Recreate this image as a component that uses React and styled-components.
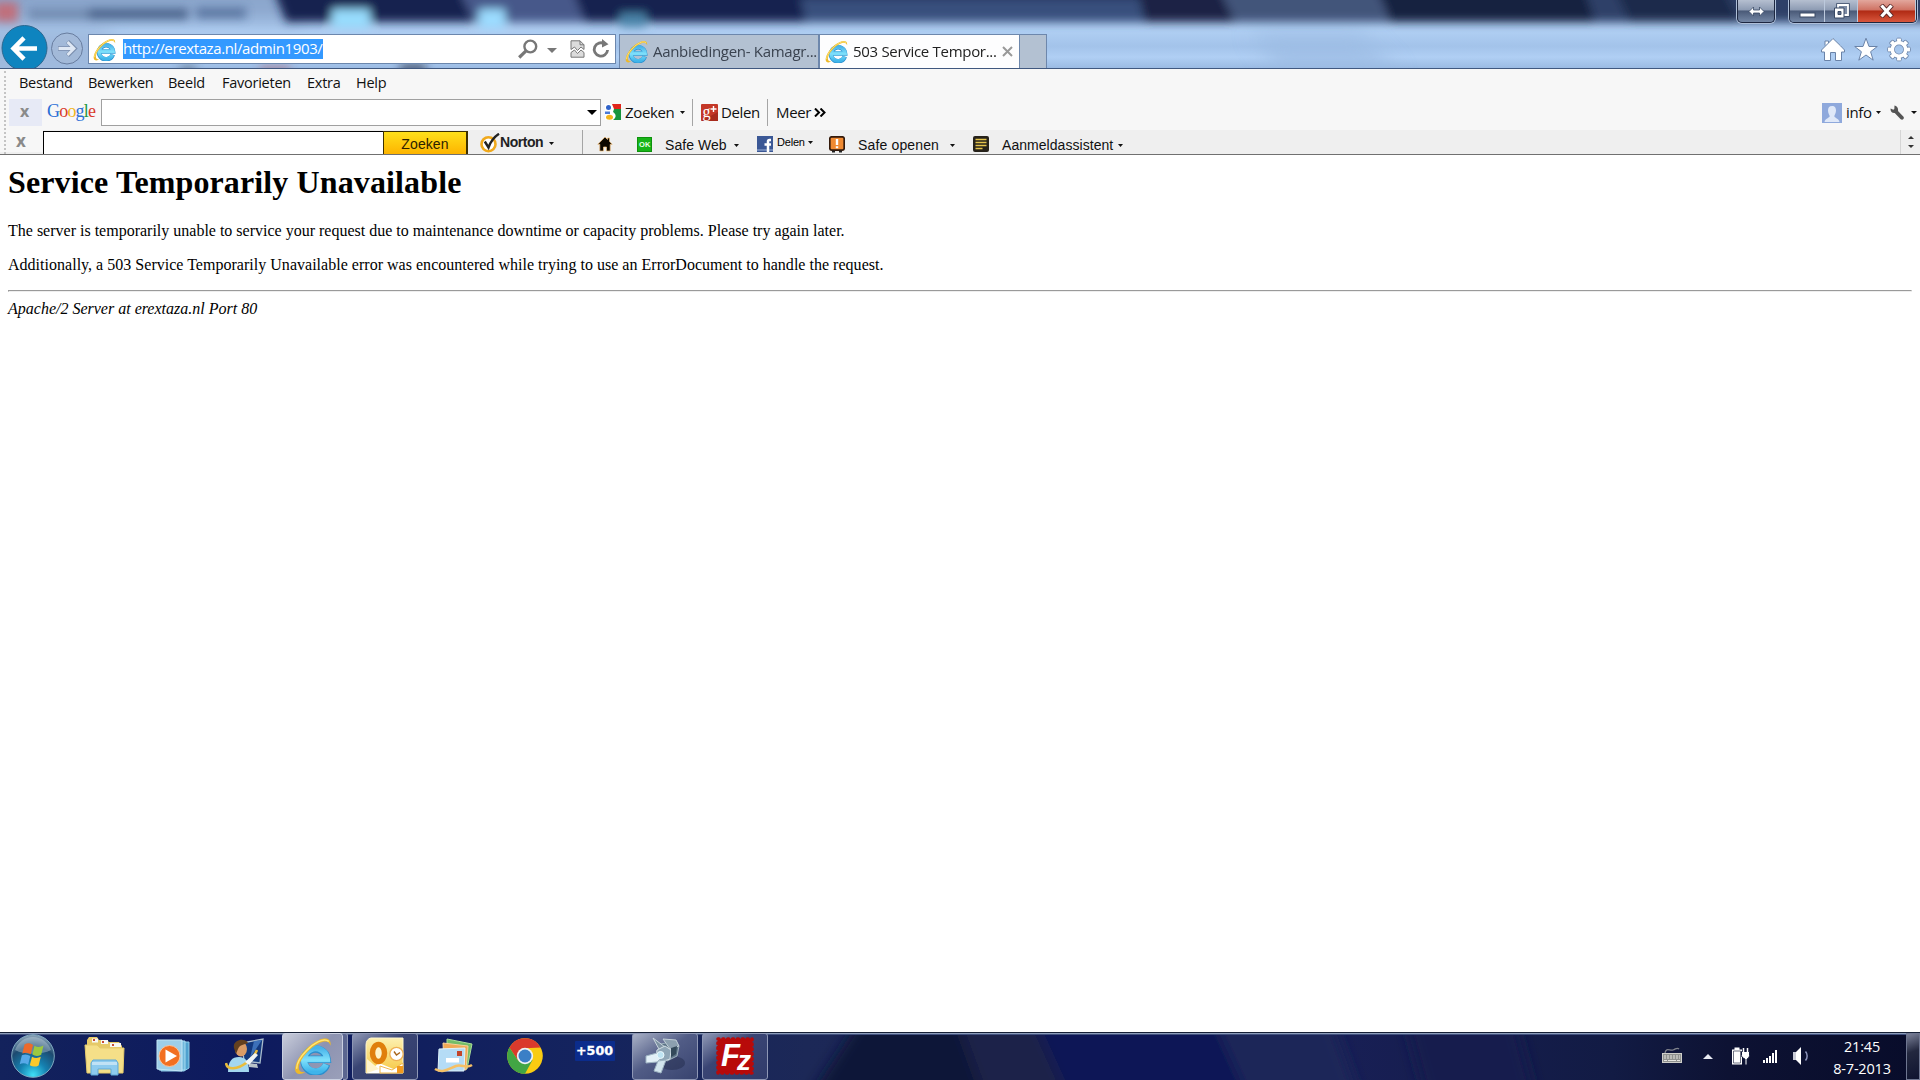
import React from "react"
import styled, { createGlobalStyle } from "styled-components"

const GlobalStyle = createGlobalStyle`
  body {
    margin: 0;
    background: white;
    overflow: hidden;
  }
`

/// icons :
function IELogo({ size = 23 }) {
  return (
    <svg width={size} height={size} viewBox="0 0 24 24">
      <defs>
        <linearGradient id="ieBlue" x1="0" y1="0" x2="0" y2="1">
          <stop offset="0" stopColor="#49b4ea" />
          <stop offset="0.5" stopColor="#7fe0fb" />
          <stop offset="1" stopColor="#3fb4ea" />
        </linearGradient>
      </defs>
      <path
        d="M20.600 17.200A7.300 7.300 0 1 1 20.900 14H8"
        fill="none"
        stroke="#2b8fce"
        strokeWidth="4.700"
      />
      <path
        d="M20.300 17.400A7.300 7.300 0 1 1 20.900 14H8"
        fill="none"
        stroke="url(#ieBlue)"
        strokeWidth="3.800"
      />
      <path
        d="M23 5.500C23.800 1.600 20.800-.3 15.500 2 8.600 5 2.300 12.400 .9 18.400-.3 23.600 3.400 24.400 7 22.300 4 22.500 2.500 21.300 3.200 18 4.400 13.200 10 6.600 15.800 3.900 20 2 22.500 2.900 23 5.500z"
        fill="#edb92a"
      />
      <path
        d="M22 2.800C18.500.2 12.500 4 8 8.500 4 12.500 1.700 17 1.700 20"
        fill="none"
        stroke="#ffe57a"
        strokeWidth=".9"
      />
    </svg>
  )
}

function Caret({ w = 6, h = 3, color = "#111", up }) {
  return (
    <svg width={w} height={h} viewBox="0 0 6 3" preserveAspectRatio="none">
      <path d={up ? "M0 3h6L3 0z" : "M0 0h6L3 3z"} fill={color} />
    </svg>
  )
}

function HouseIcon() {
  return (
    <svg width="26" height="25" viewBox="0 0 26 25">
      <path
        d="M13 1.500 1.500 13v2h3v8.500h6v-8h5v8h6V15h3v-2L20.500 8.800z M5 8.500V4h3.500v2"
        fill="#fff"
        stroke="#6a83a8"
      />
    </svg>
  )
}

function StarIcon() {
  return (
    <svg width="26" height="25" viewBox="0 0 26 25">
      <path
        d="m13 1.200 3 8.300h8.300l-6.700 5.200 2.600 8.500L13 18l-7.200 5.200 2.600-8.500L1.700 9.500H10z"
        fill="#fff"
        stroke="#6a83a8"
      />
    </svg>
  )
}

function GearIcon() {
  const teeth = [0, 45, 90, 135, 180, 225, 270, 315]
  return (
    <svg width="26" height="25" viewBox="-13 -12.500 26 25">
      {teeth.map((a) => (
        <rect
          key={a}
          x="-2.300"
          y="-11.300"
          width="4.600"
          height="5"
          rx="1"
          fill="#fff"
          stroke="#6a83a8"
          transform={`rotate(${a})`}
        />
      ))}
      <circle r="6.700" fill="none" stroke="#6a83a8" strokeWidth="5" />
      <circle r="6.700" fill="none" stroke="#fff" strokeWidth="3.600" />
      {teeth.map((a) => (
        <rect
          key={a}
          x="-1.800"
          y="-10.800"
          width="3.600"
          height="4.500"
          fill="#fff"
          transform={`rotate(${a})`}
        />
      ))}
    </svg>
  )
}

// what shines through the glass title bar
function GlassTop() {
  return (
    <Backdrop width="1920" height="68" viewBox="0 0 1920 68">
      <defs>
        <filter id="b4" filterUnits="userSpaceOnUse" x="-100" y="-60" width="2120" height="200">
          <feGaussianBlur stdDeviation="5" />
        </filter>
        <filter id="b9" filterUnits="userSpaceOnUse" x="-100" y="-60" width="2120" height="200">
          <feGaussianBlur stdDeviation="10" />
        </filter>
        <linearGradient id="skyTop" x1="0" y1="0" x2="0" y2="1">
          <stop offset="0" stopColor="#9bb9df" />
          <stop offset="0.45" stopColor="#b0cff3" />
          <stop offset="0.68" stopColor="#a3c3ea" />
          <stop offset="0.84" stopColor="#b0cff4" />
          <stop offset="1" stopColor="#9bbbe3" />
        </linearGradient>
      </defs>
      <rect width="1920" height="68" fill="url(#skyTop)" />
      <g filter="url(#b9)">
        <path d="M-60-40H300V20H-60z" fill="#8ba6cc" />
        <path d="M-40 30H110V80H-40z" fill="#9fb9dd" />
        <path d="M1250 32h110l40 42h-120z" fill="#9bbae2" opacity=".7" />
      </g>
      <g filter="url(#b4)">
        <path d="M262-40H1980V22H286z" fill="#17224f" />
        <path d="M445-40h115l25 62H474z" fill="#46588a" />
        <path d="M572-40h240v62H592z" fill="#18224f" />
        <path d="M800-2h340l12 24H806z" fill="#38507d" />
        <path d="M1130-40h80l25 62h-90z" fill="#1a2445" />
        <path d="M1205-40h157l30 62h-157z" fill="#42547a" />
        <path d="M1370-40h220l20 62h-220z" fill="#15203f" />
        <path d="M1575-40h400v62h-380z" fill="#2d3f68" />
        <path d="M1600-40h110l30 62h-110z" fill="#1e2b4c" />
        <rect x="332" y="9" width="38" height="19" fill="#97dcfd" />
        <rect x="479" y="9" width="26" height="19" fill="#9bdcff" />
        <rect x="620" y="13" width="26" height="14" fill="#4983a8" />
        <rect x="-6" y="2" width="24" height="20" fill="#c0707c" />
      </g>
      <g filter="url(#b4)" opacity=".85">
        <rect x="28" y="9" width="60" height="10" fill="#6a83a8" />
        <rect x="88" y="9" width="100" height="10" fill="#3a527a" />
        <rect x="196" y="8" width="50" height="10" fill="#4f6b96" />
      </g>
      <g filter="url(#b4)" opacity=".6">
        <rect x="180" y="66" width="16" height="8" fill="#456" />
        <rect x="260" y="66" width="30" height="8" fill="#b0606a" />
        <rect x="400" y="64" width="26" height="9" fill="#112" />
      </g>
    </Backdrop>
  )
}

function TaskbarGlass() {
  return (
    <Backdrop width="1920" height="48" viewBox="0 0 1920 48">
      <defs>
        <filter id="tb" filterUnits="userSpaceOnUse" x="-100" y="-60" width="2120" height="200">
          <feGaussianBlur stdDeviation="7" />
        </filter>
        <linearGradient id="tbBase">
          <stop offset="0" stopColor="#13225c" />
          <stop offset="0.12" stopColor="#0d1a5e" />
          <stop offset="0.3" stopColor="#14235e" />
          <stop offset="0.42" stopColor="#1c2857" />
          <stop offset="0.7" stopColor="#181f55" />
          <stop offset="0.84" stopColor="#121b44" />
          <stop offset="0.9" stopColor="#0d1233" />
          <stop offset="1" stopColor="#080c2a" />
        </linearGradient>
      </defs>
      <rect width="1920" height="48" fill="url(#tbBase)" />
      <g filter="url(#tb)">
        <path d="M872-30h90l25 110H800z" fill="#0e1638" />
        <path d="M950-30h80l50 110h-90z" fill="#1c2448" />
        <path d="M1025-30h185l50 110h-185z" fill="#0d1757" />
        <path d="M1205-30h120l40 110h-110z" fill="#1c2559" />
        <path d="M1400-30h110l30 110h-110z" fill="#131a4e" />
      </g>
      <path d="M0 .5h1920" stroke="#162036" />
      <path d="M0 1.500h1920" stroke="#8c9cba" />
      <path d="M0 2.500h1920" stroke="#42527f" />
    </Backdrop>
  )
}

function BackButton() {
  return (
    <svg width="86" height="43" viewBox="0 0 86 43">
      <circle cx="24.500" cy="23" r="22.500" fill="#0e84bf" stroke="#2a678f" />
      <path
        d="M37 23.500H14M24 12.800 13.500 23.500 24 34.200"
        fill="none"
        stroke="#fff"
        strokeWidth="4.500"
      />
      <circle cx="67" cy="23.500" r="15.500" fill="#a5b9d6" fillOpacity=".6" stroke="#677c9e" />
      <path
        d="M58 23.500h15M67.500 16.500l7 7-7 7"
        fill="none"
        stroke="#7b8fae"
        strokeWidth="4.500"
      />
      <path
        d="M58.500 23.500H73M67.500 17l6.500 6.500-6.500 6.500"
        fill="none"
        stroke="#dfe8f4"
        strokeWidth="2.800"
      />
    </svg>
  )
}

function SearchIcon() {
  return (
    <svg width="20" height="20" viewBox="0 0 20 20">
      <circle cx="12.300" cy="7.500" r="5.900" fill="none" stroke="#777" strokeWidth="2.400" />
      <path d="m8 11.800-6.800 6.700" stroke="#777" strokeWidth="3.200" />
    </svg>
  )
}

function CompatIcon() {
  return (
    <svg width="15" height="18" viewBox="0 0 15 18">
      <path d="M1 .8h9l4 4v4.700l-3-2.500-3.500 3.500L4.500 7 1 9.500z" fill="#dcdcdc" stroke="#777" />
      <path d="M1 17.200V12.500l3.500-2.500 3 3.500L11 10l3 2.500v4.700z" fill="#dcdcdc" stroke="#777" />
      <path d="M10 .8v4h4" fill="none" stroke="#777" />
    </svg>
  )
}

function RefreshIcon() {
  return (
    <svg width="18" height="20" viewBox="0 0 18 20">
      <path d="M12.500 4.800A6.700 6.700 0 1 0 15.600 11" fill="none" stroke="#777" strokeWidth="2.800" />
      <path d="M10 0v8.500l6.500-3.200z" fill="#777" />
    </svg>
  )
}

function GoogleSearchIcon() {
  return (
    <svg width="16" height="16" viewBox="0 0 16 16">
      <rect width="16" height="16" fill="#fff" />
      <path d="M7 0h9v5H9z" fill="#e0251b" />
      <path d="M9 5h7v11H8c4-3 3-6 0-8z" fill="#17953c" />
      <circle cx="3.500" cy="3.500" r="2.500" fill="#2f62c9" />
      <path d="M0 7.500h5v2.500H0z" fill="#4b7bd6" />
      <ellipse cx="4.500" cy="13.200" rx="3.500" ry="2.500" fill="#f4b51a" />
    </svg>
  )
}

function PlusIcon() {
  return (
    <svg width="17" height="17" viewBox="0 0 17 17">
      <rect width="17" height="17" rx="1" fill="#c43727" />
      <path d="M0 17 17 8v9z" fill="#a82b1d" />
      <text x="1.500" y="12.500" fontFamily="Liberation Serif, serif" fontSize="16" fill="#fff">
        g
      </text>
      <path d="M9.500 5h6M12.500 2v6" stroke="#fff" strokeWidth="1.400" />
    </svg>
  )
}

function AvatarIcon() {
  return (
    <svg width="20" height="20" viewBox="0 0 20 20">
      <rect width="20" height="20" fill="#8fa9dc" />
      <path
        d="M10 3c3 0 4 2 4 4.500S12.700 12 12.300 13c0 2 4.700 2.500 5.200 6h-15c.5-3.500 5.200-4 5.200-6C7.300 12 6 10 6 7.500S7 3 10 3z"
        fill="#dfe8f8"
      />
    </svg>
  )
}

function WrenchIcon() {
  return (
    <svg width="15" height="15" viewBox="0 0 15 15">
      <path
        d="M4.500.5 4.300 4l-1 .8L.7 3.500C0 6 1.700 8.300 4.700 8l6 6.200c2 1.300 4-.6 2.800-2.500L8 6C8.500 3 7 .8 4.500.5z"
        fill="#555"
      />
    </svg>
  )
}

function NortonIcon() {
  return (
    <svg width="20" height="20" viewBox="0 0 20 20">
      <circle cx="8.500" cy="11.200" r="7" fill="#fff" stroke="#f0a91c" strokeWidth="2.600" />
      <path d="M4.800 8.500 8.500 14.500C10.500 9 14 4 19 .8" fill="none" stroke="#222" strokeWidth="2.400" />
    </svg>
  )
}

function SmallHome() {
  return (
    <svg width="16" height="16" viewBox="0 0 16 16">
      <path
        d="M8 1 .8 8.300h2V15h3.700v-4h3v4h3.700V8.300h2L12.500 5.500V2h-2v1.500z"
        fill="#0b0700"
        stroke="#f3c27c"
        strokeWidth=".7"
      />
    </svg>
  )
}

function OkIcon() {
  return (
    <svg width="15" height="15" viewBox="0 0 15 15">
      <rect x=".5" y=".5" width="14" height="14" fill="#18b418" stroke="#0d920d" />
      <text x="2" y="9.500" fontFamily="Liberation Sans, sans-serif" fontWeight="700" fontSize="7.500" fill="#e9ffe9">
        OK
      </text>
    </svg>
  )
}

function FacebookIcon() {
  return (
    <svg width="16" height="16" viewBox="0 0 16 16">
      <rect width="16" height="16" fill="#3a5795" />
      <rect y="13" width="16" height="2" fill="#6d86b8" />
      <path d="M14 4h-1.500c-1 0-1.500.5-1.500 1.500V16M7.500 8.500H14" fill="none" stroke="#fff" strokeWidth="2.500" />
    </svg>
  )
}

function SafeIcon() {
  return (
    <svg width="16" height="17" viewBox="0 0 16 17">
      <rect x=".8" y=".8" width="14.400" height="13.400" rx="2" fill="#f08a32" stroke="#33190a" strokeWidth="1.700" />
      <path d="M8 3v6M8 10.300v2" stroke="#fff" strokeWidth="2.400" />
      <path d="M3 15.500h3M10 15.500h3" stroke="#222" strokeWidth="2" />
    </svg>
  )
}

function NotesIcon() {
  return (
    <svg width="16" height="16" viewBox="0 0 16 16">
      <rect width="16" height="16" rx="2" fill="#26221a" />
      <path d="M2.500 3.500h11M2.500 6.500h11M2.500 9.500h11M2.500 12.500h7" stroke="#e3c34c" strokeWidth="1.300" />
    </svg>
  )
}

/// taskbar icons :
function StartOrb() {
  return (
    <svg width="46" height="46" viewBox="0 0 46 46">
      <defs>
        <radialGradient id="orb" cx=".5" cy=".95" r=".95">
          <stop offset="0" stopColor="#3fe0f8" />
          <stop offset="0.35" stopColor="#1580b0" />
          <stop offset="0.7" stopColor="#1d4a70" />
          <stop offset="1" stopColor="#90a8bb" />
        </radialGradient>
      </defs>
      <circle cx="23" cy="23" r="21.300" fill="url(#orb)" stroke="#7fa9c0" />
      <path d="M5 17A19 19 0 0 1 41 17C32 22 14 22 5 17z" fill="#dce8ee" opacity=".35" />
      <path d="M14.500 11.500c3-1.800 6-1.300 8.500.5l-2.200 9.200c-2.800-1.800-5.500-2-8.500-.6z" fill="#ee6a2b" />
      <path d="M24.500 12.800c3 1.700 6 1.500 9-.2l-2.300 9.100c-3 1.600-6 1.700-8.800-.1z" fill="#9cc840" />
      <path d="M11.900 22.300c3-1.300 5.700-1 8.400.7l-2.200 8.800c-2.900-1.700-5.600-1.900-8.400-.6z" fill="#57a9e8" />
      <path d="M22 23.700c2.900 1.700 5.900 1.500 8.800.1l-2.200 8.600c-3 1.700-6 1.500-8.800-.2z" fill="#fcc92c" />
    </svg>
  )
}

function ExplorerIcon() {
  return (
    <svg width="42" height="40" viewBox="0 0 42 40">
      <path d="M3 4 5 1h8l2 3h8l2 2h10l3 4v26H3z" fill="#e6ca68" />
      <path d="M8 2.500h6v4H8zM17 4h7v4h-7zM26 7h11v4H26z" fill="#f7f8f4" />
      <path d="M9 3h2v2H9zM18 5h2v2h-2zM28 8h2v2h-2z" fill="#ca4a33" />
      <path d="M1 9h12l3 3h24l-1 25H3z" fill="#f5df88" stroke="#e6cb6c" />
      <path d="M7 39V27l2-3h23l2 3v12h-7v-6H14v6z" fill="#8dcbee" stroke="#5fa9d6" />
      <path d="M8 26h25v3H8z" fill="#c0e2f5" />
    </svg>
  )
}

function MediaIcon() {
  return (
    <svg width="34" height="34" viewBox="0 0 34 34">
      <path d="M5 3h28v26l-5 3H5z" fill="#4fa1cf" stroke="#91cee9" />
      <path d="M3 2h26v29H3z" fill="#70b8dc" stroke="#a7dcf2" />
      <path d="M1 1h25v31L1 30z" fill="#9dcfe9" stroke="#c2e6f6" />
      <circle cx="13.500" cy="17" r="10.500" fill="#f26f21" stroke="#f8c5a0" />
      <path d="m9.500 10.500 11.500 6.500-11.500 6.500z" fill="#fff" />
    </svg>
  )
}

function SupportIcon() {
  return (
    <svg width="40" height="36" viewBox="0 0 40 36">
      <path d="m17 5 21-4-3 24-16-2z" fill="#12387d" stroke="#a9bccc" strokeWidth="1.300" />
      <path d="m29 3 8-1-12 18z" fill="#3c70b8" />
      <path d="m24 25 8 1 1 4-9-1z" fill="#b9c3c9" />
      <path d="M3 34c0-11 4-15 11-15s10 5 10 15z" fill="#a3d7ef" />
      <ellipse cx="16" cy="11" rx="6" ry="7.500" fill="#d99b66" />
      <path d="M9 10C7 2 20-1 23 5c-4 2-8 1-10 6l-2 5z" fill="#63401f" />
      <path d="M1 25c1 8 12 6 20 0 6-4 9-8 11-13" fill="none" stroke="#e9bd3c" strokeWidth="2.500" />
      <path d="m20 24 10-9 3 2-9 10z" fill="#eef4f6" />
    </svg>
  )
}

function OutlookIcon() {
  return (
    <svg width="40" height="38" viewBox="0 0 40 38">
      <defs>
        <linearGradient id="olGold" x1="0" y1="0" x2="0" y2="1">
          <stop offset="0" stopColor="#fdf0b0" />
          <stop offset="1" stopColor="#f6c844" />
        </linearGradient>
      </defs>
      <path d="M6 1h32v35H1V8C1 4 3 1.500 6 1z" fill="url(#olGold)" stroke="#fff6cf" />
      <path d="M2 36 14 26l24 10z" fill="#fff" />
      <path d="m2 22 12 10L2 36z" fill="#fff3cc" />
      <path d="m15 29 12 4 11-7v10H15z" fill="#fff" stroke="#f0b74a" />
      <path d="M32 29h6v7h-6z" fill="#f39a1d" />
      <ellipse cx="13.500" cy="16" rx="6" ry="8.500" fill="#fff3c8" stroke="#e07f0c" strokeWidth="5.500" />
      <circle cx="31.500" cy="17" r="6.700" fill="#fff" stroke="#eeb053" strokeWidth="1.300" />
      <path d="m29 14.500 2.500 3.500 3.500-2.500" fill="none" stroke="#a8641a" strokeWidth="1.400" />
    </svg>
  )
}

function MailIcon() {
  return (
    <svg width="40" height="36" viewBox="0 0 40 36">
      <path d="m13 1 25 5-5 25-20-6z" fill="#74bd68" stroke="#a9dc98" />
      <path d="m9 5 25 3-2 24-22-5z" fill="#f0a956" stroke="#f9d09a" />
      <path d="m5 11 26-1-1 23H4z" fill="#b5dcf6" stroke="#e1f3fc" />
      <path d="M23 13h5v5h-5z" fill="#c2452c" />
      <path d="M12 20h13v4.500H12z" fill="#fff" />
      <path d="M1 31c8 5 15-1 21-3 6-2 10 3 16-1" fill="none" stroke="#f6c065" strokeWidth="2.600" />
    </svg>
  )
}

function ChromeLogo() {
  return (
    <svg width="38" height="38" viewBox="-19 -19 38 38">
      <circle r="17.800" fill="#f9cc12" />
      <path d="M-15.600-8.600A17.800 17.800 0 0 1 15.600-8.600L0-7.800-7 4.500z" fill="#da3a2c" />
      <path d="M-15.600-8.600A17.800 17.800 0 0 0 0 17.800L7.500 4-7 4.500z" fill="#42a644" />
      <circle r="8.200" fill="#eef3f5" />
      <circle r="6.500" fill="#3b7fc6" />
    </svg>
  )
}

function Plus500() {
  return (
    <svg width="40" height="20" viewBox="0 0 40 20">
      <rect width="40" height="20" rx="1" fill="#0b2c8c" />
      <text
        x="1"
        y="13.500"
        fontFamily="DejaVu Sans, sans-serif"
        fontWeight="700"
        fontSize="11.500"
        textLength="37"
        lengthAdjust="spacingAndGlyphs"
        fill="#fff"
        stroke="#fff"
        strokeWidth=".3"
      >
        +500
      </text>
    </svg>
  )
}

function SpotlightIcon() {
  return (
    <svg width="44" height="40" viewBox="0 0 44 40">
      <ellipse cx="29" cy="27" rx="13" ry="7" fill="#141c38" opacity=".35" />
      <path d="m18 8 13-3 5 5-2 10-10 5-9-6z" fill="#5c7486" stroke="#9fb2bf" />
      <path d="m10 2 12 9-5 4z" fill="#7e93a3" stroke="#c9d5dc" />
      <path d="m20 3 13 1 3 6-9 3z" fill="#8ca0af" stroke="#c3d0d8" />
      <path d="m14 14 8-4 6 4-1 9-9 3-5-5z" fill="#8fa6b6" stroke="#d3dfe5" />
      <path d="m3 20 11-3 4 5-4 4-11 1z" fill="#e2f0f7" stroke="#9fb5c3" />
      <path d="m15 25 8-1-5 13-7-2z" fill="#d2e5ee" stroke="#9fb5c3" />
      <circle cx="17.500" cy="19" r="3.500" fill="#bfe4f2" stroke="#eaf8fc" />
      <path d="m28 12 6-2-1 8-5 3z" fill="#33495a" />
    </svg>
  )
}

function FileZillaIcon() {
  return (
    <svg width="40" height="40" viewBox="0 0 40 40">
      <rect x="3" y="3" width="34" height="34" fill="#b80a0a" />
      <rect
        x="3"
        y="3"
        width="34"
        height="34"
        fill="none"
        stroke="#b80a0a"
        strokeWidth="3.600"
        strokeLinecap="round"
        strokeDasharray="1 3.860"
      />
      <text
        x="6"
        y="30"
        fill="#fff"
        fontFamily="Liberation Sans, sans-serif"
        fontStyle="italic"
        fontWeight="700"
        fontSize="31"
      >
        F
        <tspan dx="-3" dy="4" fontSize="28">
          z
        </tspan>
      </text>
    </svg>
  )
}

function KeyboardIcon() {
  return (
    <svg width="22" height="18" viewBox="0 0 22 18">
      <path d="M4 6c1-6 5-2 8-3s4-3 6-1" fill="none" stroke="#7f828b" strokeWidth="1.300" />
      <rect x="1.500" y="6.500" width="19" height="9" fill="#8f918f" stroke="#cfcfcb" />
      <path d="M3 9h16M3 11h16" stroke="#e5e5e0" strokeDasharray="2 1" />
      <path d="M3 13.500h16" stroke="#e5e5e0" strokeDasharray="3 1 8 1" />
    </svg>
  )
}

function BatteryIcon() {
  return (
    <svg width="19" height="20" viewBox="0 0 19 20">
      <path d="M1 3.500h2.500V1.500h5v2H11v15H1z" fill="#fff" />
      <path d="M2.500 5h7v12h-7z" fill="#fff" stroke="#4c5064" strokeWidth=".8" />
      <path d="M10.500 5.500h8v4c0 2.500-2 3-2.500 3.500V19h-2v-6c-.5-.5-3.500-1-3.500-3.500z" fill="#fff" stroke="#111738" />
      <path d="M12.500 2v4M16.500 2v4" stroke="#fff" strokeWidth="1.500" />
    </svg>
  )
}

function SignalIcon() {
  return (
    <svg width="15" height="13" viewBox="0 0 15 13">
      {[3, 5, 7, 10, 13].map((h, i) => (
        <rect key={h} x={i * 3} y={13 - h} width="2" height={h} fill="#fff" />
      ))}
    </svg>
  )
}

function SpeakerIcon() {
  return (
    <svg width="18" height="18" viewBox="0 0 18 18">
      <path d="M1 5h3v8H1z" fill="#c9cbd6" />
      <path d="m4 5 5-5v18l-5-5z" fill="#fff" />
      <path d="M13.500 4.500c2.200 2.500 2.200 6.500 0 9" fill="none" stroke="#8f96bd" strokeWidth="1.500" />
    </svg>
  )
}

const MENU = [
  ["Bestand", 69],
  ["Bewerken", 80],
  ["Beeld", 54],
  ["Favorieten", 85],
  ["Extra", 49],
  ["Help", 40],
]

const GOOGLE = [
  ["G", "#2a6fd6"],
  ["o", "#d93a2b"],
  ["o", "#efb51c"],
  ["g", "#2a6fd6"],
  ["l", "#1f9a45"],
  ["e", "#d93a2b"],
]

export default function App() {
  return (
    <Screen>
      <GlobalStyle />
      <TitleFrame>
        <GlassTop />
        <NavRow>
          <NavButtons>
            <BackButton />
          </NavButtons>
          <AddressBar>
            <IELogo />
            <Url>http://erextaza.nl/admin1903/</Url>
            <AddressTools>
              <SearchIcon />
              <Caret w={10} h={5} color="#777" />
              <CompatIcon />
              <RefreshIcon />
            </AddressTools>
          </AddressBar>
          <Tab $w={200}>
            <IELogo />
            <TabTitle>Aanbiedingen- Kamagr...</TabTitle>
          </Tab>
          <Tab $w={201} $active>
            <IELogo />
            <TabTitle>503 Service Tempor...</TabTitle>
            <TabClose width="11" height="11" viewBox="0 0 11 11">
              <path d="m1 1 9 9M10 1l-9 9" stroke="#999" strokeWidth="2" />
            </TabClose>
          </Tab>
          <Tab $w={27} />
        </NavRow>
        <FrameRight>
          <WindowButtons>
            <WinButton $w={38} $single>
              <svg width="17" height="11" viewBox="0 0 17 11">
                <path d="M1 5.500 5.500 1v3h6V1L16 5.500 11.500 10V7h-6v3z" fill="#fff" stroke="#3a4a66" strokeWidth=".8" />
              </svg>
            </WinButton>
            <WinGroup>
              <WinButton $w={35} $low>
                <svg width="17" height="6" viewBox="0 0 17 6">
                  <rect x="1" y="1" width="15" height="4" fill="#fff" stroke="#3a4a66" />
                </svg>
              </WinButton>
              <WinButton $w={33}>
                <svg width="18" height="17" viewBox="0 0 18 17">
                  <path d="M6 2h10v10H6z" fill="none" stroke="#3a4a66" strokeWidth="3.500" />
                  <path d="M6 2h10v10H6z" fill="#7d8ba5" stroke="#fff" strokeWidth="1.800" />
                  <path d="M2.500 5h9.500v10H2.500z" fill="#fff" stroke="#3a4a66" />
                  <path d="M6 8.500h3v3H6z" fill="#5f6d89" stroke="#3a4a66" />
                </svg>
              </WinButton>
              <WinButton $w={58} $close>
                <svg width="17" height="14" viewBox="0 0 17 14">
                  <path d="m3 1 11 12M14 1 3 13" stroke="#5a2a2a" strokeWidth="5" />
                  <path d="m3.500 1.500 10 11M13.500 1.500l-10 11" stroke="#fff" strokeWidth="3.300" />
                </svg>
              </WinButton>
            </WinGroup>
          </WindowButtons>
          <CommandIcons>
            <HouseIcon />
            <StarIcon />
            <GearIcon />
          </CommandIcons>
        </FrameRight>
      </TitleFrame>

      <Bars>
        <MenuBar>
          {MENU.map(([name, w]) => (
            <MenuItem key={name} $w={w}>
              {name}
            </MenuItem>
          ))}
        </MenuBar>
        <GoogleBar>
          <CloseCell>x</CloseCell>
          <GoogleWord>
            {GOOGLE.map(([c, color], i) => (
              <Letter key={i} $color={color}>
                {c}
              </Letter>
            ))}
          </GoogleWord>
          <GoogleInput>
            <Caret w={10} h={5} color="#000" />
          </GoogleInput>
          <Part $ml={4} $w={20}>
            <GoogleSearchIcon />
          </Part>
          <Part $w={55}>Zoeken</Part>
          <Part $w={12}>
            <Caret w={5} />
          </Part>
          <Divider />
          <Part $ml={8} $w={20}>
            <PlusIcon />
          </Part>
          <Part $w={46}>Delen</Part>
          <Divider />
          <Part $ml={8} $w={38}>
            Meer
          </Part>
          <Part>
            <svg width="12" height="9" viewBox="0 0 12 9">
              <path d="m1 .5 4 4-4 4M6.500.5l4 4-4 4" fill="none" stroke="#000" strokeWidth="2" />
            </svg>
          </Part>
          <Account>
            <AvatarIcon />
            <Part $ml={4} $w={30}>
              info
            </Part>
            <Part $w={14}>
              <Caret w={5} />
            </Part>
            <WrenchIcon />
            <Part $ml={6}>
              <Caret w={6} />
            </Part>
          </Account>
        </GoogleBar>
        <NortonBar>
          <NortonClose>x</NortonClose>
          <NortonInput />
          <NortonSearch>Zoeken</NortonSearch>
          <Part $ml={12} $w={20}>
            <NortonIcon />
          </Part>
          <NortonName>Norton</NortonName>
          <Part $w={33}>
            <Caret w={5} />
          </Part>
          <Divider />
          <NortonItem $ml={14} $w={40}>
            <SmallHome />
          </NortonItem>
          <NortonItem $w={28}>
            <OkIcon />
          </NortonItem>
          <NortonItem $w={69} $text>
            Safe Web
          </NortonItem>
          <NortonItem $w={23} $text>
            <Caret w={5} />
          </NortonItem>
          <NortonItem $w={20}>
            <FacebookIcon />
          </NortonItem>
          <SmallItem>Delen</SmallItem>
          <SmallCaret>
            <Caret w={5} />
          </SmallCaret>
          <NortonItem $w={29}>
            <SafeIcon />
          </NortonItem>
          <NortonItem $w={92} $text $ls={0.15}>
            Safe openen
          </NortonItem>
          <NortonItem $w={23} $text>
            <Caret w={5} />
          </NortonItem>
          <NortonItem $w={29}>
            <NotesIcon />
          </NortonItem>
          <NortonItem $w={116} $text>
            Aanmeldassistent
          </NortonItem>
          <NortonItem $text>
            <Caret w={5} />
          </NortonItem>
          <Stepper>
            <Caret up w={6} h={3} color="#333" />
            <Caret w={6} h={3} color="#333" />
          </Stepper>
        </NortonBar>
        <Grip />
      </Bars>

      <Page>
        <Heading>Service Temporarily Unavailable</Heading>
        <Text>
          The server is temporarily unable to service your request due to
          maintenance downtime or capacity problems. Please try again later.
        </Text>
        <Text $ls={0.02}>
          Additionally, a 503 Service Temporarily Unavailable error was
          encountered while trying to use an ErrorDocument to handle the
          request.
        </Text>
        <Rule />
        <Address>Apache/2 Server at erextaza.nl Port 80</Address>
      </Page>

      <Taskbar>
        <TaskbarGlass />
        <Launcher $ml={10} $w={46}>
          <StartOrb />
        </Launcher>
        <Launcher $ml={28} $w={42}>
          <ExplorerIcon />
        </Launcher>
        <Launcher $ml={30} $w={34}>
          <MediaIcon />
        </Launcher>
        <Launcher $ml={35} $w={40}>
          <SupportIcon />
        </Launcher>
        <TaskButton $ml={17} $w={61} $active>
          <IELogo size={38} />
        </TaskButton>
        <StackEdge />
        <TaskButton $ml={4} $w={66}>
          <OutlookIcon />
        </TaskButton>
        <Launcher $ml={16} $w={40}>
          <MailIcon />
        </Launcher>
        <Launcher $ml={32} $w={38}>
          <ChromeLogo />
        </Launcher>
        <Launcher $ml={31} $w={40} $up>
          <Plus500 />
        </Launcher>
        <TaskButton $ml={17} $w={66} $light>
          <SpotlightIcon />
        </TaskButton>
        <TaskButton $ml={4} $w={66}>
          <FileZillaIcon />
        </TaskButton>
        <Tray>
          <Launcher $w={42}>
            <KeyboardIcon />
          </Launcher>
          <Launcher $w={28}>
            <Caret up w={10} h={5} color="#e8eaf2" />
          </Launcher>
          <Launcher $w={32}>
            <BatteryIcon />
          </Launcher>
          <Launcher $w={29}>
            <SignalIcon />
          </Launcher>
          <Launcher $w={34}>
            <SpeakerIcon />
          </Launcher>
          <Clock>
            <Time>21:45</Time>
            <Time>8-7-2013</Time>
          </Clock>
          <ShowDesktop />
        </Tray>
      </Taskbar>
    </Screen>
  )
}

const ui = `"Open Sans", "Noto Sans", sans-serif`

const Screen = styled.div`
  width: 1920px;
  height: 1080px;
  display: flex;
  flex-direction: column;
  overflow: hidden;
  font-family: ${ui};
  svg {
    display: block;
    flex: none;
  }
`
const Backdrop = styled.svg`
  position: absolute;
  inset: 0;
  z-index: -1;
`
const TitleFrame = styled.header`
  position: relative;
  z-index: 0;
  height: 68px;
  display: flex;
  justify-content: space-between;
  border-bottom: 1px solid #40587f;
  overflow: hidden;
`
const NavRow = styled.div`
  display: flex;
  align-items: flex-start;
  padding-top: 34px;
`
const NavButtons = styled.div`
  width: 88px;
  margin-top: -9px;
`
const AddressBar = styled.div`
  box-sizing: border-box;
  width: 528px;
  height: 30px;
  margin-right: 3px;
  padding: 0 5px 0 4px;
  display: flex;
  align-items: center;
  background: white;
  border: 1px solid #6c87ad;
`
const Url = styled.span`
  margin-left: 7px;
  width: 200px;
  height: 20px;
  line-height: 19px;
  font-size: 15px;
  letter-spacing: -0.38px;
  white-space: nowrap;
  color: white;
  background: #3399ff;
`
const AddressTools = styled.div`
  margin-left: auto;
  display: flex;
  align-items: center;
  svg:nth-child(2) {
    margin: 3px 13px 0 9px;
  }
  svg:nth-child(4) {
    margin-left: 7px;
  }
`
const Tab = styled.div`
  box-sizing: border-box;
  width: ${(p) => p.$w}px;
  height: 34px;
  padding: 0 5px;
  display: flex;
  align-items: center;
  border: 1px solid #6d87ac;
  border-left-width: ${(p) => (p.$w < 50 ? 0 : 1)}px;
  border-bottom: none;
  background: ${(p) => (p.$active ? "#fdfdfe" : "#b3c1d2")};
  color: ${(p) => (p.$active ? "#222" : "#3a4350")};
`
const TabTitle = styled.span`
  margin: -2px 0 0 5px;
  font-size: 15px;
  letter-spacing: -0.3px;
  white-space: nowrap;
`
const TabClose = styled.svg`
  margin-left: auto;
  margin-right: 1px;
`
const FrameRight = styled.div`
  display: flex;
  flex-direction: column;
  align-items: flex-end;
`
const WindowButtons = styled.div`
  display: flex;
  gap: 14px;
  padding-right: 3px;
`
const WinGroup = styled.div`
  display: flex;
  border: 1px solid #1d2740;
  border-top: none;
  border-radius: 0 0 5px 5px;
  overflow: hidden;
  box-shadow: 0 0 0 1px #aebfd8;
`
const WinButton = styled.div`
  box-sizing: border-box;
  width: ${(p) => p.$w}px;
  height: ${(p) => (p.$single ? 23 : 22)}px;
  padding-top: ${(p) => (p.$low ? 8 : 0)}px;
  display: flex;
  justify-content: center;
  align-items: center;
  border-right: 1px solid #bcc9dc;
  background: ${(p) =>
    p.$close
      ? "linear-gradient(#e2a79d, #cf7263 45%, #b02a14 50%, #d8563c)"
      : "linear-gradient(#b5bfd0, #8d9bb3 45%, #4a5a78 50%, #7487a5)"};
  ${(p) =>
    p.$single &&
    `
    border: 1px solid #1d2740;
    border-top: none;
    border-radius: 0 0 5px 5px;
    box-shadow: 0 0 0 1px #aebfd8;
  `}
`
const CommandIcons = styled.div`
  display: flex;
  gap: 7px;
  padding: 14px 8px 0 0;
`
const Bars = styled.section`
  position: relative;
  height: 85px;
  display: flex;
  flex-direction: column;
  background: #f7f7f7;
  border-bottom: 1px solid #707070;
`
const Grip = styled.div`
  position: absolute;
  left: 4px;
  top: 2px;
  bottom: 0;
  border-left: 2px dotted #c4c4c4;
`
const MenuBar = styled.nav`
  height: 30px;
  padding-left: 19px;
  display: flex;
  align-items: center;
`
const MenuItem = styled.span`
  width: ${(p) => p.$w}px;
  margin-top: -4px;
  font-size: 14.5px;
  letter-spacing: -0.25px;
  color: #111;
`
const GoogleBar = styled.div`
  height: 31px;
  display: flex;
  align-items: flex-start;
  line-height: 18px;
  font-size: 15px;
  letter-spacing: -0.35px;
  color: #111;
`
const CloseCell = styled.div`
  width: 33px;
  height: 27px;
  margin-left: 9px;
  text-indent: -2px;
  text-align: center;
  line-height: 25px;
  font-size: 16px;
  font-weight: 700;
  color: #8a8a8a;
  background: #e7eaf6;
`
const GoogleWord = styled.div`
  width: 54px;
  padding-left: 5px;
  line-height: 25px;
  font-family: "Liberation Serif", serif;
  font-size: 18px;
  letter-spacing: -0.8px;
`
const Letter = styled.span`
  color: ${(p) => p.$color};
`
const GoogleInput = styled.div`
  box-sizing: border-box;
  width: 500px;
  height: 27px;
  padding-right: 3px;
  display: flex;
  justify-content: flex-end;
  align-items: center;
  background: white;
  border: 1px solid #a0a0a0;
`
const Part = styled.div`
  box-sizing: border-box;
  height: 27px;
  width: ${(p) => (p.$w ? `${p.$w}px` : "auto")};
  margin-left: ${(p) => p.$ml || 0}px;
  padding-bottom: 1px;
  display: flex;
  align-items: center;
`
const Divider = styled.div`
  width: 1px;
  height: 27px;
  background: #a5a5a5;
`
const Account = styled.div`
  margin-left: auto;
  padding-right: 3px;
  display: flex;
  align-items: center;
`
const NortonBar = styled.div`
  height: 24px;
  display: flex;
  align-items: flex-start;
  overflow: hidden;
  background: #efefef;
`
const NortonClose = styled.div`
  box-sizing: border-box;
  width: 43px;
  padding-left: 16px;
  line-height: 22px;
  font-size: 17px;
  font-weight: 700;
  color: #8a8a8a;
  background: #f7f7f7;
`
const NortonInput = styled.div`
  box-sizing: border-box;
  width: 340px;
  height: 23px;
  margin-top: 1px;
  background: white;
  border: solid #000;
  border-width: 1px 0 0 1px;
`
const NortonSearch = styled.div`
  box-sizing: border-box;
  width: 85px;
  height: 23px;
  margin-top: 1px;
  padding-top: 1px;
  text-align: center;
  line-height: 22px;
  font-family: "Liberation Sans", sans-serif;
  font-size: 14px;
  letter-spacing: 0.1px;
  color: #2b2100;
  background: linear-gradient(#ffe01a, #fdb400);
  border: solid #3d3000;
  border-width: 1px 2px 0 1px;
`
const NortonName = styled.span`
  width: 49px;
  line-height: 24px;
  font-family: "Liberation Sans", sans-serif;
  font-size: 14px;
  font-weight: 700;
  letter-spacing: -0.45px;
  color: #222;
`
const NortonItem = styled.div`
  width: ${(p) => (p.$w ? `${p.$w}px` : "auto")};
  height: 24px;
  margin-left: ${(p) => p.$ml || 0}px;
  padding-top: ${(p) => (p.$text ? 3 : 2)}px;
  display: flex;
  align-items: center;
  font-family: "Liberation Sans", sans-serif;
  font-size: 14px;
  letter-spacing: ${(p) => p.$ls || 0.05}px;
  color: #111;
`
const SmallItem = styled.span`
  width: 31px;
  line-height: 25px;
  font-family: "Liberation Sans", sans-serif;
  font-size: 11px;
  letter-spacing: -0.2px;
`
const SmallCaret = styled.div`
  width: 21px;
  padding-top: 11px;
`
const Stepper = styled.div`
  width: 19px;
  height: 24px;
  margin-left: auto;
  display: flex;
  flex-direction: column;
  align-items: center;
  justify-content: space-evenly;
  border-left: 1px solid #d5d5d5;
`
const Page = styled.main`
  flex: 1;
  padding: 9px 8px;
  background: white;
  color: #000;
  font-family: "Liberation Serif", "Times New Roman", serif;
  font-size: 16px;
`
const Heading = styled.h1`
  margin: 0 0 21px;
  font-size: 32px;
  letter-spacing: 0.12px;
`
const Text = styled.p`
  margin: 0 0 16px;
  letter-spacing: ${(p) => p.$ls || 0}px;
`
const Rule = styled.hr`
  margin: 0 0 8px;
`
const Address = styled.address`
  font-style: italic;
`
const Taskbar = styled.footer`
  position: relative;
  z-index: 0;
  height: 48px;
  display: flex;
`
const Launcher = styled.div`
  width: ${(p) => p.$w}px;
  height: ${(p) => (p.$up ? 37 : 48)}px;
  margin-left: ${(p) => p.$ml || 0}px;
  display: flex;
  align-items: center;
`
const TaskButton = styled.div`
  box-sizing: border-box;
  width: ${(p) => p.$w}px;
  height: 47px;
  margin: 1px 0 0 ${(p) => p.$ml}px;
  display: flex;
  align-items: center;
  justify-content: center;
  padding-bottom: 2px;
  border: 1px solid ${(p) => (p.$active ? "#c9cfe0" : "#8e97b5")};
  border-radius: 3px;
  background: ${(p) =>
    p.$active
      ? "linear-gradient(135deg, #c9cddb, #8d93b1 50%, #9a9fb9)"
      : p.$light
        ? "linear-gradient(145deg, #a9b1c6, #515c86 45%, #38436f)"
        : "linear-gradient(145deg, #8f98b5, #3a4574 40%, #303b6b)"};
`
const StackEdge = styled.div`
  box-sizing: border-box;
  width: 5px;
  height: 47px;
  margin-top: 1px;
  border: 1px solid #8e97b5;
  border-left: none;
  border-radius: 0 3px 3px 0;
  background: #5b6690;
`
const Tray = styled.div`
  margin-left: auto;
  display: flex;
`
const Clock = styled.div`
  width: 72px;
  padding-top: 4px;
  margin-right: 8px;
  text-align: center;
`
const Time = styled.div`
  height: 22px;
  line-height: 22px;
  font-size: 14.5px;
  letter-spacing: -0.2px;
  white-space: nowrap;
  color: white;
`
const ShowDesktop = styled.div`
  box-sizing: border-box;
  width: 14px;
  height: 47px;
  margin-top: 1px;
  border: 1px solid #6e7690;
  background: linear-gradient(160deg, #7b8199, #23283f 40%, #0f1430);
`
